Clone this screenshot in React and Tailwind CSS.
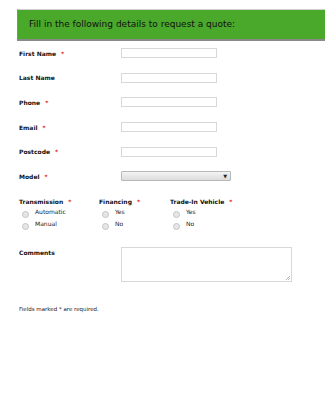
import React from 'react';

const Star = () => <span className="text-[#e02020] ml-[5px]">*</span>;

function Row({ label, required, children }) {
    return (
        <div className="flex items-center h-[24.6px]">
            <div className="w-[102px] font-bold text-[6px] text-[#111]">
                {label}
                {required && <Star />}
            </div>
            {children}
        </div>
    );
}

const Input = () => (
    <div className="w-[96px] h-[10px] border border-[#d8d8d8] bg-white"></div>
);

function Radio({ label }) {
    return (
        <div className="flex items-start h-[12px]">
            <span className="mt-[3px] w-[7px] h-[7px] rounded-full border border-[#c4c4c4] bg-[#e6e6e6]"></span>
            <span className="ml-[6px] text-[6px] text-[#222] -mt-[1px]">{label}</span>
        </div>
    );
}

function RadioGroup({ title, options, className }) {
    return (
        <div className={className}>
            <div className="font-bold text-[6px] text-[#111] h-[11px]">
                {title}
                <Star />
            </div>
            <div className="pl-[3px]">
                {options.map(o => <Radio key={o} label={o} />)}
            </div>
        </div>
    );
}

export default function App() {
    return (
        <div className="w-[325px] h-[400px] bg-white overflow-hidden" style={{ fontFamily: '"DejaVu Sans", Verdana, sans-serif' }}>
            <div className="pt-[9px] pl-[17px]">
                <div className="h-[32px] bg-[#4aa82b] border-t border-t-[#d0d0d0] border-l border-l-[#8a8a8a] border-b-2 border-b-[#8a8a8a] flex items-center pl-[11px] text-[9px] text-[#111]">
                    Fill in the following details to request a quote:
                </div>
            </div>
            <div className="pl-[19px]">
                <Row label="First Name" required><Input /></Row>
                <Row label="Last Name"><Input /></Row>
                <Row label="Phone" required><Input /></Row>
                <Row label="Email" required><Input /></Row>
                <Row label="Postcode" required><Input /></Row>
                <Row label="Model" required>
                    <div className="w-[110px] h-[10px] border border-[#b8b8b8] rounded-[1px] bg-gradient-to-b from-[#f4f4f4] to-[#dcdcdc] flex items-center justify-end pr-[3px]">
                        <span className="text-[5px] text-[#222] leading-none">▼</span>
                    </div>
                </Row>
                <div className="flex mt-[8px]">
                    <RadioGroup title="Transmission" options={['Automatic', 'Manual']} className="w-[80px]" />
                    <RadioGroup title="Financing" options={['Yes', 'No']} className="w-[71px]" />
                    <RadioGroup title="Trade-In Vehicle" options={['Yes', 'No']} />
                </div>
                <div className="flex mt-[15px]">
                    <div className="w-[102px] font-bold text-[6px] text-[#111] pt-[1px]">Comments</div>
                    <div className="relative w-[171px] h-[35px] border border-[#d8d8d8] bg-white">
                        <svg className="absolute right-[1px] bottom-[1px]" width="5" height="5" viewBox="0 0 5 5">
                            <path d="M1 5 L5 1 M3 5 L5 3" stroke="#999" strokeWidth="0.7" />
                        </svg>
                    </div>
                </div>
                <div className="mt-[23px] text-[5.5px] text-[#222]">Fields marked * are required.</div>
            </div>
        </div>
    );
}
